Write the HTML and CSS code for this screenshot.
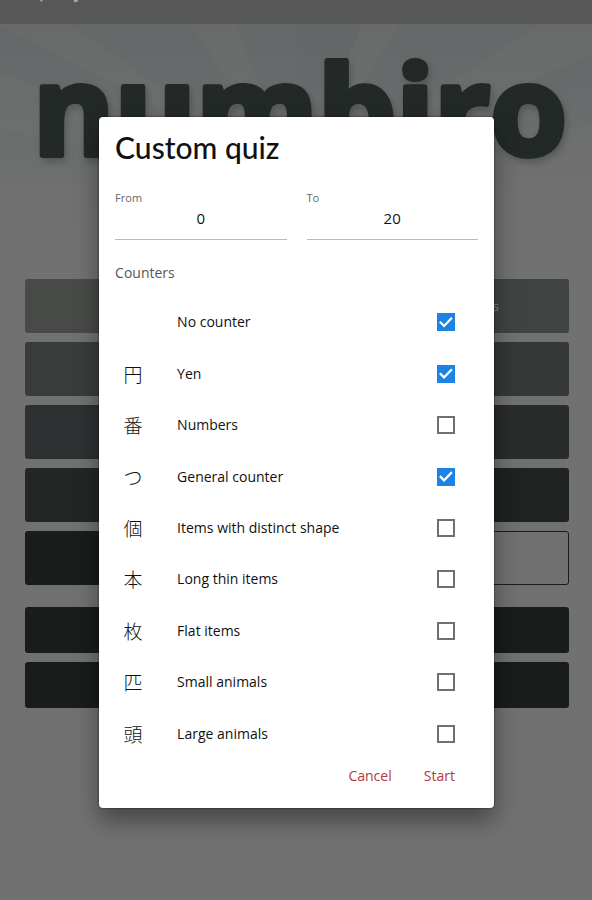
FILE: index.html
```html
<!DOCTYPE html>
<html lang="en">
<head>
<meta charset="utf-8">
<meta name="viewport" content="width=device-width, initial-scale=1">
<title>numbiro</title>
<link rel="stylesheet" href="styles.css">
</head>
<body>
<div class="app" inert>
  <header class="statusbar">
    <svg class="statusbar-marks" viewBox="0 0 60 3" aria-hidden="true"><path d="M1.500 0V1.500M34 .5Q36 2 37.500 0"/></svg>
  </header>
  <main class="home">
    <svg class="hero" viewBox="0 0 592 255" role="img" aria-label="numbiro">
      <defs>
        <linearGradient id="fade" x1="0" y1="0" x2="0" y2="1">
          <stop offset="0" stop-color="#717171" stop-opacity="0"/>
          <stop offset="0.8" stop-color="#717171"/>
        </linearGradient>
      </defs>
      <rect class="sky" width="592" height="255"/>
      <path class="ray" d="M298 160L0 0V48ZM298 160L70 0H190ZM298 160L235 0H298ZM298 160L400 0H540ZM298 160L592 30V100ZM298 160L0 105V165Z"/>
      <path class="ray-dark" d="M298 160V0H362Z"/>
      <rect width="592" height="255" fill="url(#fade)"/>
      <text class="logo" x="300" y="131" text-anchor="middle">numbiro</text>
    </svg>
    <div class="quizzes">
      <button class="tile tone-1" type="button" aria-label="Quiz 1"></button>
      <button class="tile tone-2 tile-end" type="button">s</button>
      <button class="tile tone-3" type="button" aria-label="Quiz 3"></button>
      <button class="tile tone-4" type="button" aria-label="Quiz 4"></button>
      <button class="tile tone-5" type="button" aria-label="Quiz 5"></button>
      <button class="tile tone-6" type="button" aria-label="Quiz 6"></button>
      <button class="tile tone-7" type="button" aria-label="Quiz 7"></button>
      <button class="tile tone-8" type="button" aria-label="Quiz 8"></button>
      <button class="tile tone-9" type="button" aria-label="Quiz 9"></button>
      <button class="tile outlined" type="button" aria-label="Custom"></button>
    </div>
    <div class="links">
      <button class="tile tone-9" type="button" aria-label="More"></button>
      <button class="tile tone-9" type="button" aria-label="About"></button>
    </div>
  </main>
</div>

<div class="overlay">
  <form class="dialog" role="dialog" aria-labelledby="dialog-title">
    <h1 class="title" id="dialog-title">Custom quiz</h1>
    <div class="range">
      <div class="field">
        <label for="from">From</label>
        <input id="from" type="text" inputmode="numeric" value="0">
      </div>
      <div class="field">
        <label for="to">To</label>
        <input id="to" type="text" inputmode="numeric" value="20">
      </div>
    </div>
    <h2 class="subtitle">Counters</h2>
    <ul class="counters">
      <li><label class="counter"><span class="kanji"></span><span>No counter</span><input type="checkbox" checked></label></li>
      <li><label class="counter"><span class="kanji" lang="ja">円</span><span>Yen</span><input type="checkbox" checked></label></li>
      <li><label class="counter"><span class="kanji" lang="ja">番</span><span>Numbers</span><input type="checkbox"></label></li>
      <li><label class="counter"><span class="kanji" lang="ja">つ</span><span>General counter</span><input type="checkbox" checked></label></li>
      <li><label class="counter"><span class="kanji" lang="ja">個</span><span>Items with distinct shape</span><input type="checkbox"></label></li>
      <li><label class="counter"><span class="kanji" lang="ja">本</span><span>Long thin items</span><input type="checkbox"></label></li>
      <li><label class="counter"><span class="kanji" lang="ja">枚</span><span>Flat items</span><input type="checkbox"></label></li>
      <li><label class="counter"><span class="kanji" lang="ja">匹</span><span>Small animals</span><input type="checkbox"></label></li>
      <li><label class="counter"><span class="kanji" lang="ja">頭</span><span>Large animals</span><input type="checkbox"></label></li>
    </ul>
    <div class="actions">
      <button class="action" type="button">Cancel</button>
      <button class="action" type="submit">Start</button>
    </div>
  </form>
</div>
</body>
</html>
```
FILE: styles.css
```css
* {
  box-sizing: border-box;
}

body {
  margin: 0;
  min-height: 100vh;
  background: #717171;
  color: #111;
  font-family: "Open Sans", "Noto Sans CJK JP", sans-serif;
}

button,
input {
  font: inherit;
}

.statusbar {
  height: 24px;
  padding-left: 40px;
  background: #575757;
}

.statusbar-marks {
  display: block;
  width: 60px;
  height: 3px;
  fill: none;
  stroke: #aaa;
  stroke-width: 2;
}

.hero {
  display: block;
  width: 100%;
}

.sky {
  fill: #696b6b;
}

.ray {
  fill: #646869;
}

.ray-dark {
  fill: #626667;
}

.logo {
  fill: #222927;
  stroke: #222927;
  stroke-width: 6px;
  stroke-linejoin: round;
  font-family: "Open Sans", sans-serif;
  font-size: 124px;
  font-weight: 700;
  filter: drop-shadow(2px 4px 3px rgba(0, 0, 0, 0.2));
}

.quizzes,
.links {
  display: grid;
  gap: 9px;
  padding: 0 23px 0 25px;
}

.quizzes {
  grid-template-columns: 1fr 1fr;
  grid-auto-rows: 54px;
}

.links {
  grid-auto-rows: 46px;
  padding-top: 22px;
}

.tile {
  padding: 0;
  border: 0;
  border-radius: 3px;
  color: #8a8c8b;
  font-size: 13px;
}

.tile-end {
  padding-right: 70px;
  text-align: right;
}

.tone-1 { background: #484a48; }
.tone-2 { background: #3f4442; }
.tone-3 { background: #383d3b; }
.tone-4 { background: #343836; }
.tone-5 { background: #2d3132; }
.tone-6 { background: #282c2a; }
.tone-7 { background: #222624; }
.tone-8 { background: #1e2220; }
.tone-9 { background: #181d1b; }

.outlined {
  border: 1px solid #181d1b;
  background: transparent;
}

.overlay {
  position: absolute;
  inset: 0;
  display: flex;
  align-items: center;
  justify-content: center;
  padding: 24px 0 0 1px;
}

.dialog {
  width: 66.8%;
  padding: 15px 16px 16px;
  border-radius: 4px;
  background: #fff;
  box-shadow: 0 0 2px rgba(0, 0, 0, 0.7), 0 12px 24px rgba(0, 0, 0, 0.4);
}

.title {
  margin: 0 0 28px;
  font-family: Lato, sans-serif;
  font-size: 30px;
  font-weight: 500;
  line-height: 30px;
}

.range {
  display: grid;
  grid-template-columns: 1fr 1fr;
  gap: 20px;
}

.field label {
  display: block;
  color: #666;
  font-size: 11px;
  line-height: 16px;
}

.field input {
  display: block;
  width: 100%;
  height: 34px;
  padding: 0 0 8px;
  border: 0;
  border-bottom: 1px solid #bbb;
  border-radius: 0;
  background: transparent;
  color: #111;
  font-size: 15px;
  text-align: center;
  outline: 0;
}

.subtitle {
  margin: 25px 0 16px;
  color: #555;
  font-size: 14px;
  font-weight: 400;
  line-height: 16px;
}

.counters {
  display: grid;
  grid-auto-rows: 1fr;
  min-height: 463px;
  margin: 0;
  padding: 0;
  list-style: none;
}

.counter {
  display: grid;
  grid-template-columns: 36px 1fr 18px;
  align-items: center;
  column-gap: 26px;
  height: 100%;
  padding-right: 23px;
  font-size: 14px;
  line-height: 20px;
}

.kanji {
  font-family: "Noto Sans CJK JP", sans-serif;
  font-size: 19px;
  font-weight: 300;
  text-align: center;
}

.counter input {
  width: 18px;
  height: 18px;
  margin: 0;
  border: 2px solid #707070;
  background: #fff;
  appearance: none;
}

.counter input:checked {
  border: 0;
  background: #1c82e4;
}

.counter input:checked::before {
  content: "";
  display: block;
  width: 18px;
  height: 18px;
  background: #fff;
  clip-path: polygon(12% 52%, 21% 43%, 40% 62%, 79% 21%, 88% 30%, 40% 80%);
}

.actions {
  display: flex;
  justify-content: flex-end;
  gap: 32px;
  padding-right: 23px;
}

.action {
  height: 32px;
  padding: 0;
  border: 0;
  background: transparent;
  color: #b5393f;
  font-size: 14px;
}
```
